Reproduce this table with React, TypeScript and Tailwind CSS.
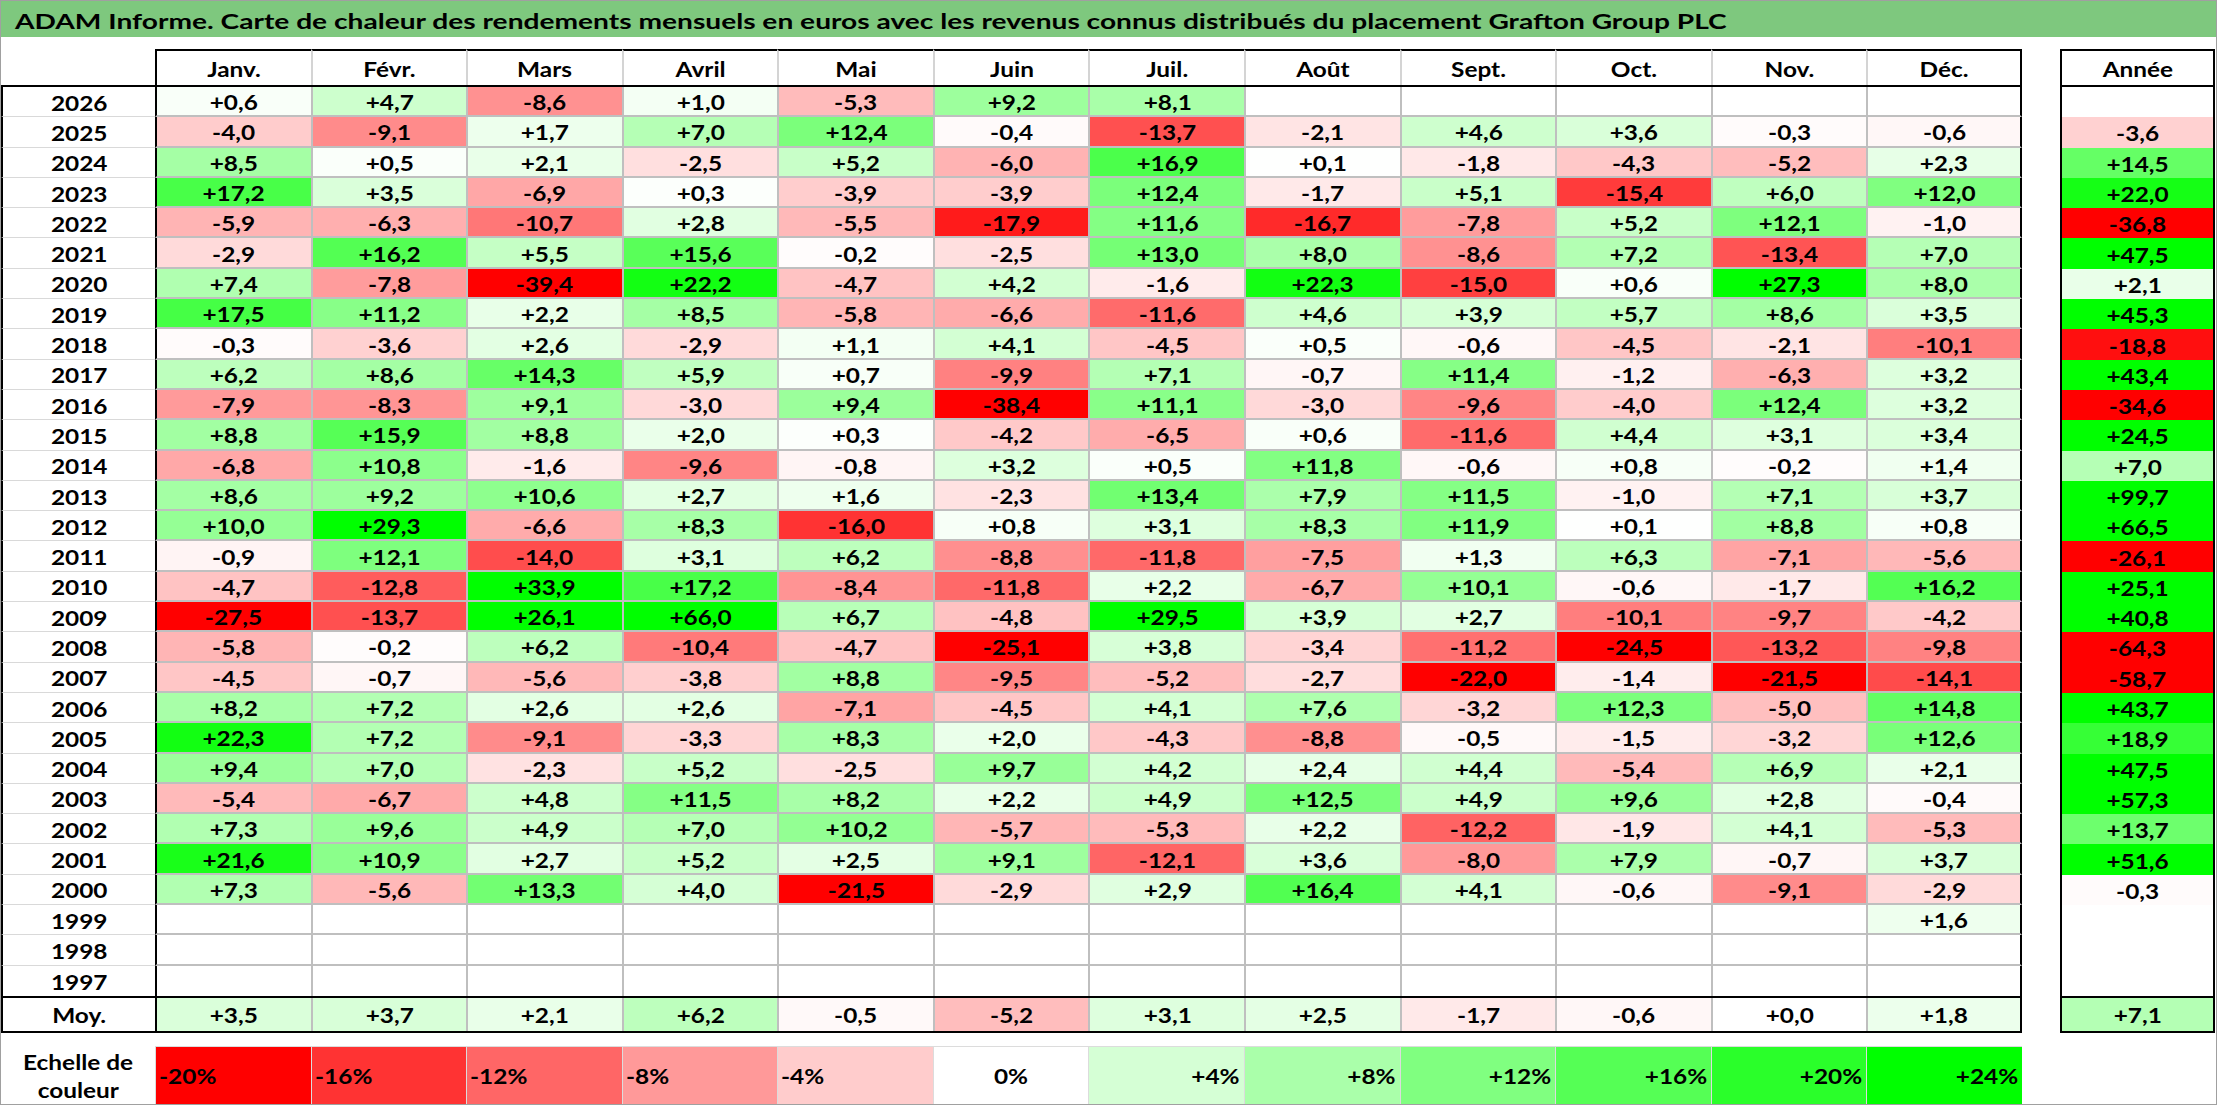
import React from "react";

const MONTHS = ["Janv.", "Févr.", "Mars", "Avril", "Mai", "Juin", "Juil.", "Août", "Sept.", "Oct.", "Nov.", "Déc."];

const RAW: [string, string, string][] = [
  ["2026", "+0,6 +4,7 -8,6 +1,0 -5,3 +9,2 +8,1 _ _ _ _ _", "_"],
  ["2025", "-4,0 -9,1 +1,7 +7,0 +12,4 -0,4 -13,7 -2,1 +4,6 +3,6 -0,3 -0,6", "-3,6"],
  ["2024", "+8,5 +0,5 +2,1 -2,5 +5,2 -6,0 +16,9 +0,1 -1,8 -4,3 -5,2 +2,3", "+14,5"],
  ["2023", "+17,2 +3,5 -6,9 +0,3 -3,9 -3,9 +12,4 -1,7 +5,1 -15,4 +6,0 +12,0", "+22,0"],
  ["2022", "-5,9 -6,3 -10,7 +2,8 -5,5 -17,9 +11,6 -16,7 -7,8 +5,2 +12,1 -1,0", "-36,8"],
  ["2021", "-2,9 +16,2 +5,5 +15,6 -0,2 -2,5 +13,0 +8,0 -8,6 +7,2 -13,4 +7,0", "+47,5"],
  ["2020", "+7,4 -7,8 -39,4 +22,2 -4,7 +4,2 -1,6 +22,3 -15,0 +0,6 +27,3 +8,0", "+2,1"],
  ["2019", "+17,5 +11,2 +2,2 +8,5 -5,8 -6,6 -11,6 +4,6 +3,9 +5,7 +8,6 +3,5", "+45,3"],
  ["2018", "-0,3 -3,6 +2,6 -2,9 +1,1 +4,1 -4,5 +0,5 -0,6 -4,5 -2,1 -10,1", "-18,8"],
  ["2017", "+6,2 +8,6 +14,3 +5,9 +0,7 -9,9 +7,1 -0,7 +11,4 -1,2 -6,3 +3,2", "+43,4"],
  ["2016", "-7,9 -8,3 +9,1 -3,0 +9,4 -38,4 +11,1 -3,0 -9,6 -4,0 +12,4 +3,2", "-34,6"],
  ["2015", "+8,8 +15,9 +8,8 +2,0 +0,3 -4,2 -6,5 +0,6 -11,6 +4,4 +3,1 +3,4", "+24,5"],
  ["2014", "-6,8 +10,8 -1,6 -9,6 -0,8 +3,2 +0,5 +11,8 -0,6 +0,8 -0,2 +1,4", "+7,0"],
  ["2013", "+8,6 +9,2 +10,6 +2,7 +1,6 -2,3 +13,4 +7,9 +11,5 -1,0 +7,1 +3,7", "+99,7"],
  ["2012", "+10,0 +29,3 -6,6 +8,3 -16,0 +0,8 +3,1 +8,3 +11,9 +0,1 +8,8 +0,8", "+66,5"],
  ["2011", "-0,9 +12,1 -14,0 +3,1 +6,2 -8,8 -11,8 -7,5 +1,3 +6,3 -7,1 -5,6", "-26,1"],
  ["2010", "-4,7 -12,8 +33,9 +17,2 -8,4 -11,8 +2,2 -6,7 +10,1 -0,6 -1,7 +16,2", "+25,1"],
  ["2009", "-27,5 -13,7 +26,1 +66,0 +6,7 -4,8 +29,5 +3,9 +2,7 -10,1 -9,7 -4,2", "+40,8"],
  ["2008", "-5,8 -0,2 +6,2 -10,4 -4,7 -25,1 +3,8 -3,4 -11,2 -24,5 -13,2 -9,8", "-64,3"],
  ["2007", "-4,5 -0,7 -5,6 -3,8 +8,8 -9,5 -5,2 -2,7 -22,0 -1,4 -21,5 -14,1", "-58,7"],
  ["2006", "+8,2 +7,2 +2,6 +2,6 -7,1 -4,5 +4,1 +7,6 -3,2 +12,3 -5,0 +14,8", "+43,7"],
  ["2005", "+22,3 +7,2 -9,1 -3,3 +8,3 +2,0 -4,3 -8,8 -0,5 -1,5 -3,2 +12,6", "+18,9"],
  ["2004", "+9,4 +7,0 -2,3 +5,2 -2,5 +9,7 +4,2 +2,4 +4,4 -5,4 +6,9 +2,1", "+47,5"],
  ["2003", "-5,4 -6,7 +4,8 +11,5 +8,2 +2,2 +4,9 +12,5 +4,9 +9,6 +2,8 -0,4", "+57,3"],
  ["2002", "+7,3 +9,6 +4,9 +7,0 +10,2 -5,7 -5,3 +2,2 -12,2 -1,9 +4,1 -5,3", "+13,7"],
  ["2001", "+21,6 +10,9 +2,7 +5,2 +2,5 +9,1 -12,1 +3,6 -8,0 +7,9 -0,7 +3,7", "+51,6"],
  ["2000", "+7,3 -5,6 +13,3 +4,0 -21,5 -2,9 +2,9 +16,4 +4,1 -0,6 -9,1 -2,9", "-0,3"],
  ["1999", "_ _ _ _ _ _ _ _ _ _ _ +1,6", "_"],
  ["1998", "_ _ _ _ _ _ _ _ _ _ _ _", "_"],
  ["1997", "_ _ _ _ _ _ _ _ _ _ _ _", "_"],
];

const AVG = "+3,5 +3,7 +2,1 +6,2 -0,5 -5,2 +3,1 +2,5 -1,7 -0,6 +0,0 +1,8".split(" ");
const AVG_YEAR = "+7,1";

const SCALE = [-20, -16, -12, -8, -4, 0, 4, 8, 12, 16, 20, 24];

function val(s: string | null): number | null {
  if (s === null || s === "_") return null;
  return parseFloat(s.replace(",", "."));
}

function heat(v: number | null): string {
  if (v === null) return "#ffffff";
  if (v < 0) {
    const t = Math.min(1, -v / 20);
    const g = Math.round(255 * (1 - t));
    return `rgb(255,${g},${g})`;
  }
  const t = Math.min(1, v / 24);
  const c = Math.round(255 * (1 - t));
  return `rgb(${c},255,${c})`;
}

function T({ children, origin = "center" }: { children: React.ReactNode; origin?: "center" | "left" | "right" }) {
  const o = origin === "left" ? "origin-left" : origin === "right" ? "origin-right" : "origin-center";
  return <span className={`inline-block scale-x-[1.22] whitespace-nowrap ${o}`}>{children}</span>;
}

const COLS = "grid grid-cols-[154px_repeat(12,minmax(0,1fr))]";

export default function App() {
  return (
    <div className="w-[2217px] h-[1105px] bg-white border border-[#a0a0a0] font-['Lato','Liberation_Sans',sans-serif] font-bold text-black text-[20px] leading-none flex flex-col overflow-hidden">
      {/* Title */}
      <div className="h-[36px] bg-[#7ec87e] flex items-center pl-[14px] pt-[3px] shrink-0">
        <span className="inline-block origin-left scale-x-[1.34] whitespace-nowrap text-[21px]">
          ADAM Informe. Carte de chaleur des rendements mensuels en euros avec les revenus connus distribués du placement Grafton Group PLC
        </span>
      </div>
      <div className="h-[12px] shrink-0" />

      <div className="flex flex-row gap-[38px]">
        {/* Main table */}
        <div className="w-[2021px] flex flex-col shrink-0">
          {/* header */}
          <div className={`${COLS} h-[38px] border-b-2 border-b-black`}>
            <div />
            {MONTHS.map((m, i) => (
              <div
                key={m}
                className={`flex items-center justify-center pt-[2px] border-t-2 border-t-black border-l-2 ${
                  i === 0 ? "border-l-black" : "border-l-[#d4d4d4]"
                } ${i === 11 ? "border-r-2 border-r-black" : ""}`}
              >
                <T>{m}</T>
              </div>
            ))}
          </div>

          {/* data rows */}
          {RAW.map(([year, line], ri) => {
            const cells = line.split(" ");
            const last = ri === RAW.length - 1;
            return (
              <div key={year} className={`${COLS} h-[30.3px]`}>
                <div
                  className={`flex items-center justify-center pt-[2px] border-l-2 border-l-black ${
                    last ? "" : "border-b border-b-[#d9d9d9]"
                  }`}
                >
                  <T>{year}</T>
                </div>
                {cells.map((c, ci) => (
                  <div
                    key={ci}
                    style={{ backgroundColor: heat(val(c)) }}
                    className={`flex items-center justify-center pt-[2px] border-l-2 ${
                      ci === 0 ? "border-l-black" : "border-l-[#bfbfbf]"
                    } ${ci === 11 ? "border-r-2 border-r-black" : ""} ${last ? "" : "border-b-2 border-b-[#bfbfbf]"}`}
                  >
                    {c !== "_" && <T>{c}</T>}
                  </div>
                ))}
              </div>
            );
          })}

          {/* average row */}
          <div className={`${COLS} h-[37px] border-y-2 border-y-black`}>
            <div className="flex items-center justify-center pt-[2px] border-l-2 border-l-black">
              <T>Moy.</T>
            </div>
            {AVG.map((c, ci) => (
              <div
                key={ci}
                style={{ backgroundColor: heat(val(c)) }}
                className={`flex items-center justify-center pt-[2px] border-l-2 ${
                  ci === 0 ? "border-l-black" : "border-l-[#bfbfbf]"
                } ${ci === 11 ? "border-r-2 border-r-black" : ""}`}
              >
                <T>{c}</T>
              </div>
            ))}
          </div>

          <div className="h-[13px]" />

          {/* colour scale */}
          <div className={`${COLS} h-[58px]`}>
            <div className="flex flex-col items-center justify-center gap-[8px] pt-[2px]">
              <T>Echelle de</T>
              <T>couleur</T>
            </div>
            {SCALE.map((s, i) => {
              const label = s > 0 ? `+${s}%` : `${s}%`;
              const align = s < 0 ? "justify-start pl-[3px]" : s > 0 ? "justify-end pr-[4px]" : "justify-center";
              return (
                <div
                  key={s}
                  style={{ backgroundColor: heat(s) }}
                  className={`flex items-center pt-[2px] border-l border-t border-[#dcdcdc] ${align}`}
                >
                  <T origin={s < 0 ? "left" : s > 0 ? "right" : "center"}>{label}</T>
                </div>
              );
            })}
          </div>
        </div>

        {/* Year column */}
        <div className="w-[155px] flex flex-col shrink-0">
          <div className="h-[38px] border-2 border-black flex items-center justify-center pt-[2px]">
            <T>Année</T>
          </div>
          {RAW.map(([year, , a]) => (
            <div
              key={year}
              style={{ backgroundColor: heat(val(a)) }}
              className="h-[30.3px] border-x-2 border-x-black flex items-center justify-center pt-[2px]"
            >
              {a !== "_" && <T>{a}</T>}
            </div>
          ))}
          <div
            style={{ backgroundColor: heat(val(AVG_YEAR)) }}
            className="h-[37px] border-2 border-black flex items-center justify-center pt-[2px]"
          >
            <T>{AVG_YEAR}</T>
          </div>
        </div>
      </div>
    </div>
  );
}
